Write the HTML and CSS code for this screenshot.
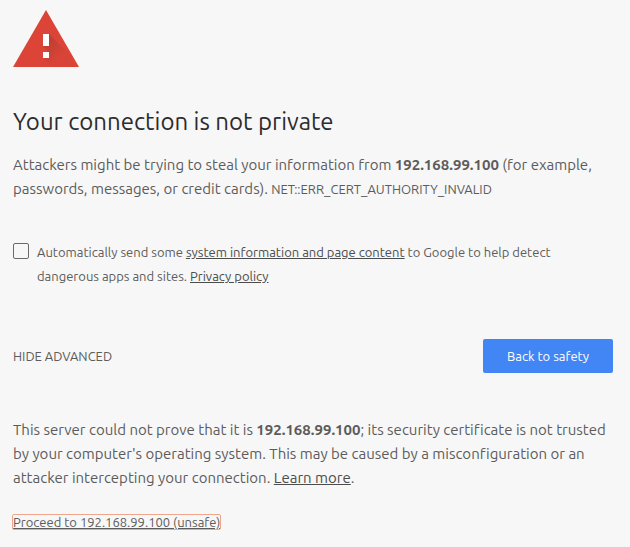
FILE: index.html
```html
<!DOCTYPE html>
<html lang="en">
<head>
    <meta charset="UTF-8">
    <meta name="viewport" content="width=device-width, initial-scale=1">
    <title>Privacy error</title>
    <link rel="stylesheet" href="styles.css">
</head>
<body>
    <main class="interstitial">
        <svg class="icon" viewBox="0 0 66 57" aria-hidden="true">
            <path d="M33 0L66 57H0Z" fill="#db4437"/>
            <path d="M36 24L53 41L62 57H39L30 48L36 42L30 36Z" fill="url(#shade)"/>
            <path d="M30 24h6v12h-6zM30 42h6v6h-6z" fill="#fff"/>
            <defs>
                <linearGradient id="shade" gradientUnits="userSpaceOnUse" x1="32" y1="32" x2="46" y2="46">
                    <stop offset="0" stop-color="#3e2723" stop-opacity="0.2"/>
                    <stop offset="1" stop-color="#3e2723" stop-opacity="0.02"/>
                </linearGradient>
            </defs>
        </svg>

        <h1>Your connection is not private</h1>
        <p class="message">Attackers might be trying to steal your information from <strong>192.168.99.100</strong> (for example, passwords, messages, or credit cards). <span class="error-code">NET::ERR_CERT_AUTHORITY_INVALID</span></p>

        <div class="opt-in">
            <input type="checkbox" id="opt-in-checkbox" class="checkbox">
            <label for="opt-in-checkbox">Automatically send some <a href="#">system information and page content</a> to Google to help detect dangerous apps and sites. <a href="#">Privacy policy</a></label>
        </div>

        <div class="nav-wrapper">
            <button type="button" class="details-button">HIDE ADVANCED</button>
            <button type="button" class="primary-button">Back to safety</button>
        </div>

        <div class="details">
            <p>This server could not prove that it is <strong>192.168.99.100</strong>; its security certificate is not trusted by your computer's operating system. This may be caused by a misconfiguration or an attacker intercepting your connection. <a href="#">Learn more</a>.</p>
            <p class="proceed"><a href="#" class="proceed-link">Proceed to 192.168.99.100 (unsafe)</a></p>
        </div>
    </main>
</body>
</html>
```
FILE: styles.css
```css
body {
    margin: 0;
    background: #f7f7f7;
    color: #5c5c5c;
    font-family: Ubuntu, "Open Sans", "Noto Sans", sans-serif;
    font-size: 15px;
    font-variant-ligatures: none;
    line-height: 24px;
}

.interstitial {
    max-width: 600px;
    margin: 0 auto;
    padding: 10px 16px 0 12px;
}

.icon {
    display: block;
    width: 66px;
    height: 57px;
}

h1 {
    margin: 39px 0 15px;
    color: #2c2c2c;
    font-size: 24px;
    font-weight: normal;
    line-height: 32px;
}

p {
    margin: 0;
}

a {
    color: #4c4c4c;
    text-decoration: underline;
}

.error-code {
    font-size: 13px;
}

.opt-in {
    display: flex;
    gap: 8px;
    margin-top: 39px;
    font-size: 13px;
}

.checkbox {
    appearance: none;
    flex: none;
    box-sizing: border-box;
    width: 16px;
    height: 16px;
    margin: 3px 0 0;
    background: transparent;
    border: 1px solid #696969;
    border-radius: 2px;
}

.checkbox:checked {
    background: #696969;
}

.nav-wrapper {
    display: flex;
    align-items: center;
    justify-content: space-between;
    margin-top: 51px;
}

button {
    border: 0;
    font-family: inherit;
    font-size: 13px;
    cursor: pointer;
}

.details-button {
    padding: 0;
    background: none;
    color: #5c5c5c;
}

.primary-button {
    height: 34px;
    padding: 0 24px;
    background: #4285f4;
    border-radius: 2px;
    color: #fff;
}

.details {
    margin-top: 45px;
}

.proceed {
    margin-top: 20px;
    font-size: 13px;
}

.proceed-link {
    display: inline-block;
    color: #5c5c5c;
    line-height: 14px;
    outline: 1px solid #f0a68c;
    border-radius: 1px;
}
```
